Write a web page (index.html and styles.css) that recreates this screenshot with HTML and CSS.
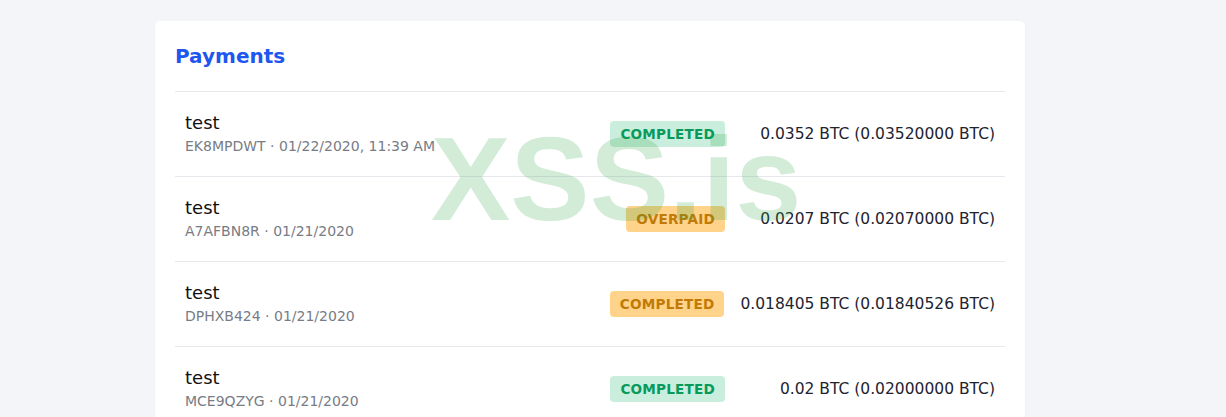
FILE: index.html
```html
<!DOCTYPE html>
<html>
<head>
    <title>Payments</title>
    <link rel="stylesheet" href="styles.css">
</head>
<body>

<div class="card">
    <h2 class="card-title">Payments</h2>

    <div class="payment-list">
        <div class="payment-row">
            <div class="payment-info">
                <div class="payment-name">test</div>
                <div class="payment-meta">EK8MPDWT · 01/22/2020, 11:39 AM</div>
            </div>
            <span class="badge badge-green">COMPLETED</span>
            <div class="payment-amount">0.0352 BTC (0.03520000 BTC)</div>
        </div>
        <div class="payment-row">
            <div class="payment-info">
                <div class="payment-name">test</div>
                <div class="payment-meta">A7AFBN8R · 01/21/2020</div>
            </div>
            <span class="badge badge-orange">OVERPAID</span>
            <div class="payment-amount">0.0207 BTC (0.02070000 BTC)</div>
        </div>
        <div class="payment-row">
            <div class="payment-info">
                <div class="payment-name">test</div>
                <div class="payment-meta">DPHXB424 · 01/21/2020</div>
            </div>
            <span class="badge badge-orange">COMPLETED</span>
            <div class="payment-amount">0.018405 BTC (0.01840526 BTC)</div>
        </div>
        <div class="payment-row">
            <div class="payment-info">
                <div class="payment-name">test</div>
                <div class="payment-meta">MCE9QZYG · 01/21/2020</div>
            </div>
            <span class="badge badge-green">COMPLETED</span>
            <div class="payment-amount">0.02 BTC (0.02000000 BTC)</div>
        </div>
    </div>

    <div class="watermark">XSS.is</div>
</div>

</body>
</html>
```

FILE: styles.css
```css
body {
    font-family: "DejaVu Sans", sans-serif;
    margin: 0;
    background-color: #f4f5f9;
}
.card {
    position: relative;
    width: 830px;
    margin: 21px 0 0 155px;
    padding: 0 20px;
    background-color: #fff;
    border-radius: 5px;
    box-shadow: 0 1px 3px rgba(0, 0, 0, 0.04);
}
.card-title {
    margin: 0;
    padding: 20px 0;
    font-size: 20px;
    line-height: 30px;
    font-weight: bold;
    color: #1f56ef;
}
.payment-row {
    display: flex;
    align-items: center;
    height: 84px;
    padding: 0 10px;
    border-top: 1px solid #e7e8ee;
}
.payment-info {
    flex: 1;
}
.payment-name {
    font-size: 18px;
    line-height: 22px;
    color: #111;
}
.payment-meta {
    margin-top: 2px;
    font-size: 14px;
    line-height: 20px;
    color: #777c85;
}
.badge {
    height: 26px;
    line-height: 26px;
    padding: 0 10px;
    border-radius: 4px;
    font-size: 13.6px;
    font-weight: bold;
    letter-spacing: 0.2px;
}
.badge-green {
    background-color: #caeedd;
    color: #079a5c;
}
.badge-orange {
    background-color: #ffd38a;
    color: #c27a06;
}
.payment-amount {
    min-width: 254px;
    flex-shrink: 0;
    margin-left: 16px;
    text-align: right;
    white-space: nowrap;
    font-size: 15.5px;
    color: #1e2330;
}
.watermark {
    position: absolute;
    left: 276px;
    top: 98px;
    font-family: "Liberation Sans", Arial, sans-serif;
    font-size: 119px;
    line-height: 1;
    font-weight: bold;
    color: rgba(34, 160, 60, 0.2);
    pointer-events: none;
}
```
